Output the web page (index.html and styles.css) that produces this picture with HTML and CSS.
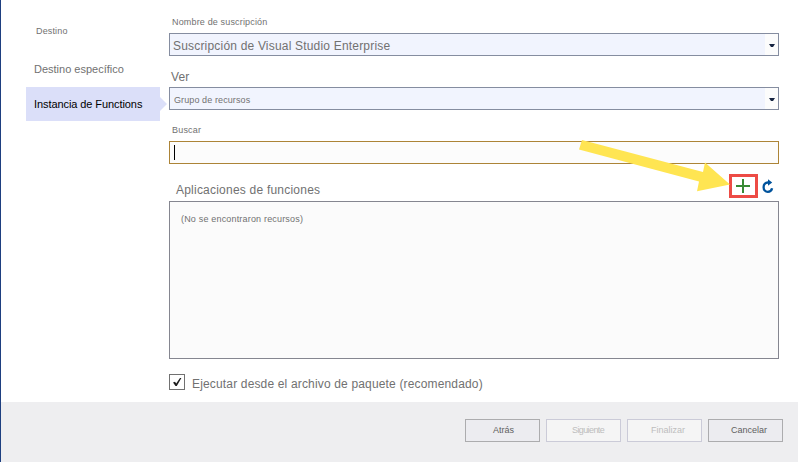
FILE: index.html
```html
<!DOCTYPE html>
<html lang="es">
<head>
<meta charset="utf-8">
<title>Publicar</title>
<link rel="stylesheet" href="styles.css">
</head>
<body>
<div class="dialog">
  <div class="content">
    <nav class="steps">
      <a class="step step-target"><span>Destino</span></a>
      <a class="step step-specific"><span>Destino específico</span></a>
      <a class="step step-active"><span>Instancia de Functions</span></a>
    </nav>
    <main class="form">
      <div class="label label-subscription"><span>Nombre de suscripción</span></div>
      <div class="field select select-subscription"><span>Suscripción de Visual Studio Enterprise</span><i class="drop"><svg width="6" height="3" viewBox="0 0 6 3"><path d="M0 0h6L4 3H2z" fill="#172542"/></svg></i></div>
      <div class="label label-view"><span>Ver</span></div>
      <div class="field select select-view"><span>Grupo de recursos</span><i class="drop"><svg width="6" height="3" viewBox="0 0 6 3"><path d="M0 0h6L4 3H2z" fill="#172542"/></svg></i></div>
      <div class="label label-search"><span>Buscar</span></div>
      <div class="field search"><i class="caret"></i></div>
      <div class="label label-apps">
        <span>Aplicaciones de funciones</span>
        <div class="actions">
          <div class="add"><svg width="14" height="14" viewBox="0 0 14 14"><path d="M7 0v14M0 7h14" stroke="#388a34" stroke-width="2"/></svg></div>
          <svg class="refresh" width="12" height="15" viewBox="0 0 12 15"><path d="M7 3.500H5.800C3.400 3.500 1.600 5.600 1.600 8.200c0 2.700 1.800 4.600 4.200 4.600 2.200 0 3.800-1.200 4.300-3.500" fill="none" stroke="#00539c" stroke-width="2.300"/><path d="M6 .2 10.200 3.400 6 6.800z" fill="#00539c"/></svg>
        </div>
      </div>
      <div class="list"><span>(No se encontraron recursos)</span></div>
      <div class="check"><i class="box"><svg width="14" height="14" viewBox="0 0 14 14"><path d="M3 7.500 5 6.800 6.200 8.500 10 3h1.400L6.800 11H5.500z" fill="#1e1e1e"/></svg></i><span>Ejecutar desde el archivo de paquete (recomendado)</span></div>
    </main>
  </div>
  <footer class="footer">
    <div class="button back"><span>Atrás</span></div>
    <div class="button disabled next"><span>Siguiente</span></div>
    <div class="button disabled finish"><span>Finalizar</span></div>
    <div class="button cancel"><span>Cancelar</span></div>
  </footer>
  <svg class="arrow" width="152" height="54" viewBox="578 139 152 54"><path d="M582 140 703 172 705 162.500 730 184.500 697 191.300 699 181.500 579 149.500z" fill="#ffe552"/></svg>
</div>
</body>
</html>
```
FILE: styles.css
```css
* { box-sizing: border-box; }
body { margin: 0; font-family: "Liberation Sans", sans-serif; color: #717171; background: #fff; }
.dialog { position: relative; width: 798px; height: 462px; border-left: 1px solid #1e3f80; overflow: hidden; font-size: 12px; line-height: 16px; white-space: nowrap; }
.content { display: flex; height: 402px; }
.steps { width: 168px; padding: 23px 0 0 25px; }
.step { display: block; padding-left: 8px; }
.step-target { height: 38px; padding-left: 10px; font-size: 9px; letter-spacing: .15px; }
.step-specific { height: 26px; font-size: 11px; }
.step-active { position: relative; width: 134px; height: 34px; padding-top: 9px; background: #dbdff9; color: #000; font-size: 11px; letter-spacing: -.08px; }
.step-active::after { content: ""; position: absolute; left: 134px; top: 10px; border: 7px solid transparent; border-left-color: #dbdff9; border-right: 0; }
.form { width: 610px; }
.label { height: 31px; }
.label-subscription { height: 33px; padding: 14px 0 0 3px; font-size: 9px; letter-spacing: .16px; }
.label-view { padding: 13px 0 0 2px; letter-spacing: .1px; }
.label-search { padding: 12px 0 0 3px; font-size: 9px; letter-spacing: .2px; }
.label-apps { display: flex; justify-content: space-between; height: 37px; padding-left: 7px; letter-spacing: .22px; }
.label-apps > span { padding-top: 18px; }
.field { display: flex; height: 23px; border: 1px solid #858da0; background: #f1f4fe; }
.select { justify-content: space-between; }
.select > span { padding: 4px 0 0 3px; letter-spacing: .19px; }
.select-view > span { padding-left: 4px; font-size: 9px; letter-spacing: .1px; }
.drop { display: flex; align-items: center; justify-content: center; width: 13px; background: #fcfcfc; padding-top: 1px; }
.search { background: #fcfcfc; border-color: #ac8437; }
.caret { width: 1px; height: 15px; margin: 3px 0 0 4px; background: #000; }
.actions { display: flex; padding: 10px 5px 0 0; }
.add { display: flex; align-items: center; width: 29px; height: 24px; padding-left: 4px; border: 3px solid #ed4b45; margin-right: 4px; }
.refresh { margin-top: 5px; }
.list { height: 158px; border: 1px solid #858690; background: #fbfbfb; padding: 9px 0 0 11px; font-size: 9px; letter-spacing: .18px; }
.check { display: flex; padding-top: 15px; letter-spacing: .16px; }
.box { width: 16px; height: 16px; border: 1px solid #717171; margin-right: 7px; }
.box svg { display: block; }
.check > span { padding-top: 2px; }
.footer { display: flex; justify-content: flex-end; gap: 6px; height: 60px; padding: 17px 15px 0 0; background: #eeeef0; }
.button { width: 75px; height: 23px; border: 1px solid #acacae; background: #ececf0; color: #606060; font-size: 9px; padding: 2px 0 0; }
.disabled { border-color: #cbcbd8; background: #f5f5f5; color: #bdbdbd; }
.back { padding-left: 27px; }
.next { padding-left: 25px; letter-spacing: -.6px; }
.finish { padding-left: 23px; }
.cancel { padding-left: 22px; }
.arrow { position: absolute; left: 577px; top: 139px; }
```
